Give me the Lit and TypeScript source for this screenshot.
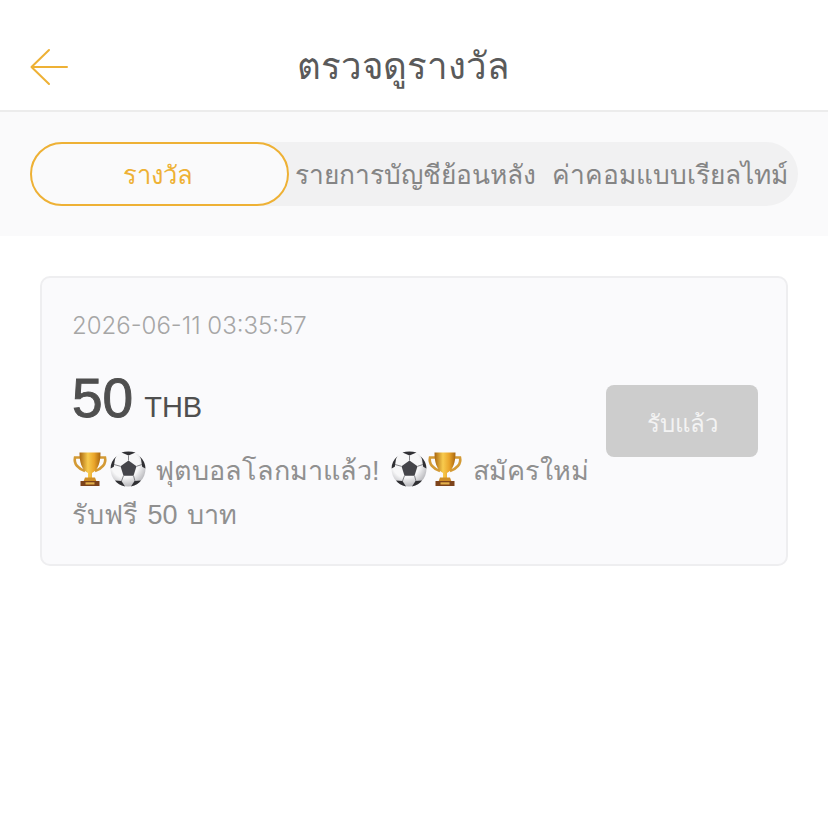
import { LitElement, css, html, svg } from 'lit';
import { customElement } from 'lit/decorators.js';

const trophy = html`<svg class="emoji cup" viewBox="0 0 36 36"><defs><linearGradient id="gold" x1="0" y1="0" x2="1" y2="0"><stop offset="0" stop-color="#a9660f" /><stop offset="0.4" stop-color="#f8cb4e" /><stop offset="0.7" stop-color="#eaa52a" /><stop offset="1" stop-color="#a9660f" /></linearGradient></defs><path d="M9 6.500H3C1.500 13 6.500 18 13 20M27 6.500h6C34.500 13 29.500 18 23 20" fill="none" stroke="#d39a35" stroke-width="2.600" /><path d="M7.500 1.500h21c0 9.500-2 17-8.500 20.500v6h-4v-6C9.500 18.500 7.500 11 7.500 1.500z" fill="url(#gold)" /><path d="M13 26.500h10l1.500 4h-13z" fill="#d08f27" /><path d="M8.500 30h19v5h-19z" fill="#7d431b" /><path d="M13.500 31.300h9v2.200h-9z" fill="#e3b04b" /></svg>`;

const ball = html`<svg class="emoji" viewBox="0 0 36 36"><defs><radialGradient id="shade" cx="0.42" cy="0.35" r="0.72"><stop offset="0.55" stop-color="#f7f7f8" /><stop offset="1" stop-color="#a9a9ae" /></radialGradient></defs><circle cx="18" cy="18" r="17.500" fill="url(#shade)" />${svg`<path d="M18.500 9.500l8 5.800-3 9.400h-10l-3-9.400z" fill="#45454a" /><path d="M11.500 1.600l7 2.900 7-2.900C21 .2 15.500 .2 11.500 1.600z" fill="#2f2f33" /><path d="M.6 17.500l3.200-1.800 1.200-7.800 1.500-2.700C2.500 8.500 .5 13 .6 17.500z" fill="#2f2f33" /><path d="M35.400 17.500l-3.200-1.800L31 7.900l-1.500-2.700c4 3.300 6 7.800 5.900 12.300z" fill="#2f2f33" /><path d="M5 29.500l6.500.6 3.500 5.300C10.500 34.500 7 32.500 5 29.500z" fill="#2f2f33" /><path d="M31 29.500l-6.500.6-3.500 5.300c4.500-.9 8-2.900 10-5.900z" fill="#2f2f33" /><path d="M18.500 9.500v-5M26.500 15.300l5.500-1.800M23.500 24.700l1.500 5.400M13.500 24.700L11.500 30M10.500 15.300L4 13.500" stroke="#77777c" stroke-width="0.900" fill="none" />`}</svg>`;

@customElement('app-root')
export class AppRoot extends LitElement {
  render() {
    return html`
      <header class="header">
        <svg class="back" viewBox="0 0 38 38" fill="none" stroke="#eeb135" stroke-width="2" stroke-linecap="round" stroke-linejoin="round">
          <path d="M37 19H1.500M19 2L1.500 19 19 36" />
        </svg>
        <h1 class="title">ตรวจดูรางวัล</h1>
      </header>
      <div class="strip">
        <div class="tabs">
          <div class="tab active">รางวัล</div>
          <div class="tab first">รายการบัญชีย้อนหลัง</div>
          <div class="tab">ค่าคอมแบบเรียลไทม์</div>
        </div>
      </div>
      <main class="content">
        <section class="card">
          <div class="info">
            <div class="date">2026-06-11 03:35:57</div>
            <div class="amount"><span class="num">50</span><span class="cur">THB</span></div>
            <p class="desc">${trophy}${ball}<span class="gap"></span>ฟุตบอลโลกมาแล้ว! <span class="gap lead"></span>${ball}${trophy}<span class="gap last"></span>สมัครใหม่ รับฟรี 50 บาท</p>
          </div>
          <button class="claim">รับแล้ว</button>
        </section>
      </main>
    `;
  }

  static styles = css`
    * {
      box-sizing: border-box;
    }
    :host {
      display: block;
      min-height: 823px;
      background: #fff;
      font-family: 'Liberation Sans', 'Noto Sans', 'DejaVu Sans', sans-serif;
    }

    .header {
      display: flex;
      align-items: center;
      justify-content: center;
      position: relative;
      height: 112px;
      padding: 0 22px 0 0;
      border-bottom: 2px solid #ececec;
    }
    .back {
      position: absolute;
      left: 30px;
      top: 48px;
      width: 38px;
      height: 38px;
    }
    .title {
      margin: 0;
      padding-top: 24px;
      font-size: 36.7px;
      line-height: 44px;
      font-weight: 400;
      color: #5a5a5a;
    }

    .strip {
      background: #fafafb;
      height: 124px;
      padding: 30px 30px 0;
    }
    .tabs {
      display: flex;
      align-items: center;
      height: 64px;
      width: 768px;
      border-radius: 32px;
      background: #f1f1f2;
    }
    .tab {
      font-size: 26.3px;
      line-height: 32px;
      padding-top: 2px;
      color: #858585;
      white-space: nowrap;
      margin-right: 16px;
    }
    .tab.first {
      margin-left: -11px;
    }
    .tab.active {
      display: flex;
      align-items: center;
      justify-content: center;
      width: 259px;
      height: 64px;
      flex: none;
      margin-right: 17px;
      padding-right: 3px;
      border: 2px solid #eeb135;
      border-radius: 32px;
      background: #fafafb;
      color: #eeb135;
      font-size: 25.6px;
    }

    .content {
      padding: 40px 40px 0;
    }
    .card {
      display: flex;
      align-items: center;
      height: 290px;
      padding: 0 28px 0 30px;
      border: 2px solid #eeeef0;
      border-radius: 10px;
      background: #fafafc;
    }
    .info {
      flex: 1;
      min-width: 0;
      align-self: flex-start;
      padding: 34px 6px 0 0;
    }
    .date {
      font-family: Inter, 'Liberation Sans', sans-serif;
      font-size: 24px;
      font-weight: 300;
      line-height: 28px;
      color: #a6a6a6;
    }
    .amount {
      display: flex;
      align-items: baseline;
      gap: 11px;
      margin-top: 26px;
      color: #4f4f4f;
      line-height: 64px;
    }
    .num {
      font-size: 55px;
      -webkit-text-stroke: 1px #4f4f4f;
    }
    .cur {
      font-size: 29px;
    }
    .desc {
      margin: 10px 0 0;
      font-size: 27px;
      word-spacing: 2px;
      line-height: 44px;
      color: #909090;
    }
    .gap {
      display: inline-block;
      width: 9px;
    }
    .gap.lead {
      width: 2px;
    }
    .gap.last {
      width: 8px;
    }
    .emoji {
      display: inline-block;
      width: 36px;
      height: 36px;
      vertical-align: -7px;
    }
    .cup {
      margin-right: 2px;
    }
    .claim {
      flex: none;
      width: 152px;
      height: 72px;
      padding-top: 5px;
      border: none;
      border-radius: 8px;
      background: #cdcdcd;
      color: #f3f3f3;
      font: inherit;
      font-size: 24px;
    }
  `;
}

declare global {
  interface HTMLElementTagNameMap {
    'app-root': AppRoot;
  }
}
